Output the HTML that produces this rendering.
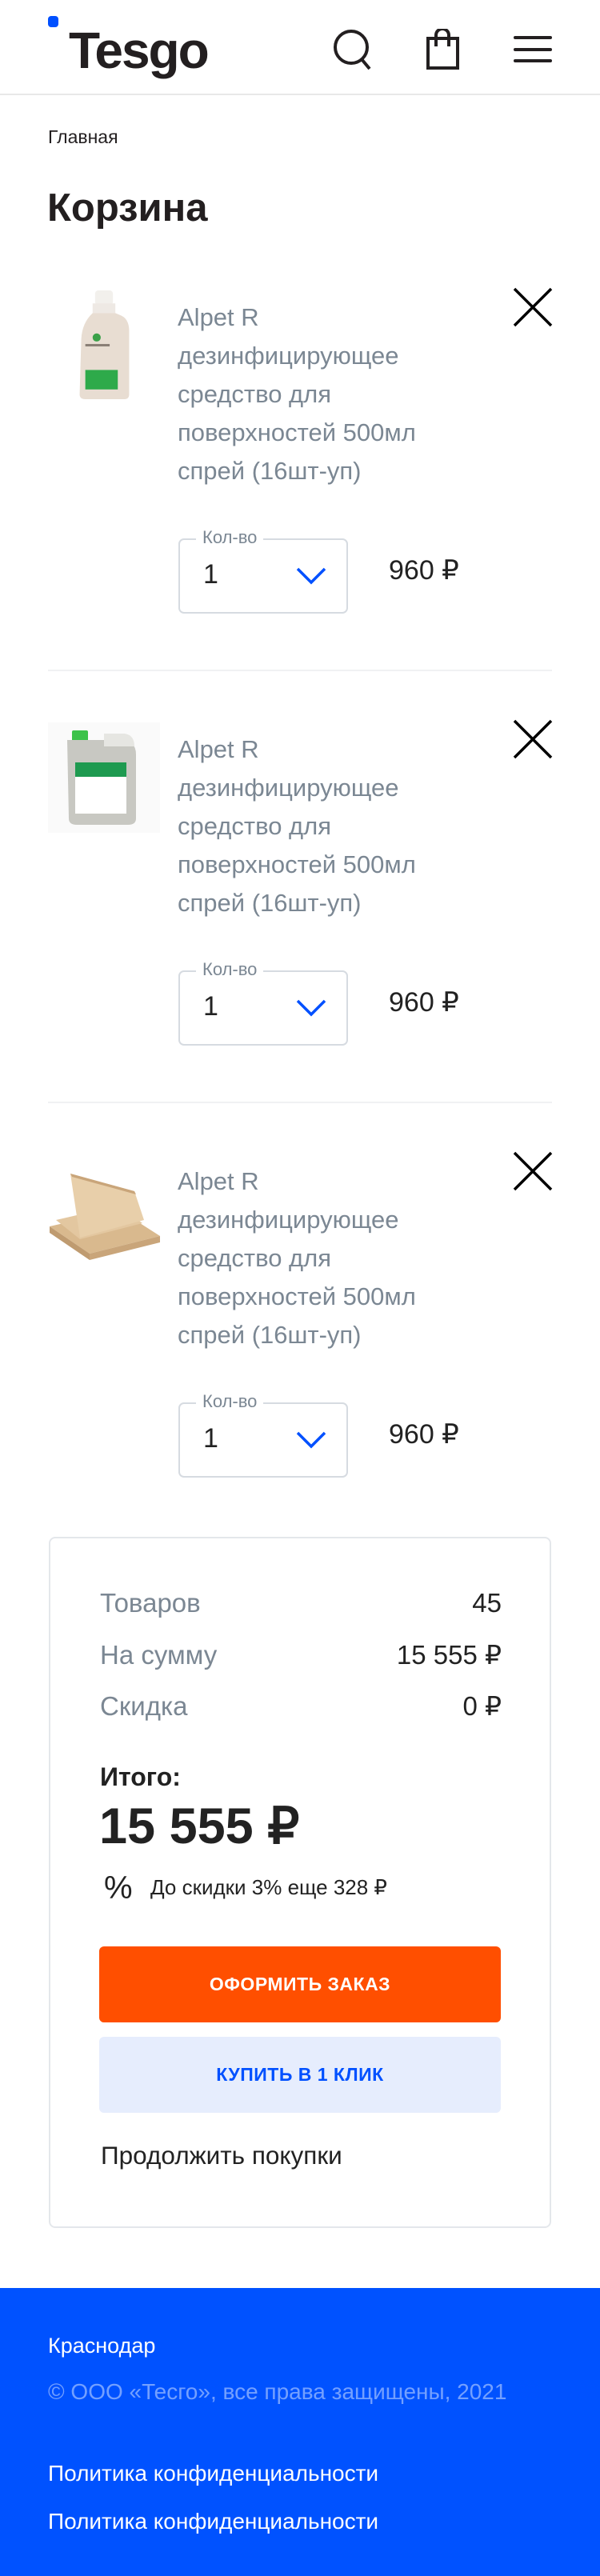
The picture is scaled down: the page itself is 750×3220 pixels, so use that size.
<!DOCTYPE html>
<html><head><meta charset="utf-8">
<style>
*{margin:0;padding:0;box-sizing:border-box}
body{width:750px;height:3220px;position:relative;background:#fff;font-family:"Liberation Sans",Arial,sans-serif;color:#222;overflow:hidden}
.a{position:absolute;white-space:nowrap}
.t{font-size:31px;line-height:48px;color:#7b8793}
.lbl{font-size:22px;color:#7b8793;background:#fff;padding:0 8px;line-height:26px}
.qty{width:212px;height:94px;border:2px solid #d6dbe1;border-radius:7px}
.price{font-size:34px;line-height:40px;color:#222}
.sep{height:2px;background:#f0f1f3;left:60px;width:630px}
.row{font-size:33px;line-height:40px}
.g{color:#7b8793}
</style></head><body>

<!-- header -->
<div class="a" style="left:60px;top:20px;width:13px;height:14px;background:#0050ff;border-radius:4px"></div>
<div class="a" style="left:86px;top:26px;font-size:64px;font-weight:bold;line-height:74px;letter-spacing:-2px;color:#231f20">Tesgo</div>
<svg class="a" style="left:412px;top:34px" width="58" height="56" viewBox="0 0 58 56"><circle cx="27" cy="25" r="20" fill="none" stroke="#231f20" stroke-width="4"/><path d="M40 40 L50 52" stroke="#231f20" stroke-width="4"/></svg>
<svg class="a" style="left:532px;top:36px" width="44" height="52" viewBox="0 0 44 52"><rect x="3" y="12" width="37" height="37" fill="none" stroke="#231f20" stroke-width="4"/><path d="M13 22 V8 A8 8 0 0 1 29 8 V22" fill="none" stroke="#231f20" stroke-width="4"/></svg>
<div class="a" style="left:642px;top:45px;width:48px;height:4px;background:#231f20;border-radius:2px"></div>
<div class="a" style="left:642px;top:60px;width:48px;height:4px;background:#231f20;border-radius:2px"></div>
<div class="a" style="left:642px;top:74px;width:48px;height:4px;background:#231f20;border-radius:2px"></div>
<div class="a" style="left:0;top:117px;width:750px;height:2px;background:#e8e8e8"></div>

<div class="a" style="left:60px;top:157px;font-size:23px;line-height:28px;color:#231f20">Главная</div>
<div class="a" style="left:59px;top:232px;font-size:49px;font-weight:bold;line-height:56px;color:#231f20">Корзина</div>

<!-- item 1 -->
<div class="a" style="left:0;top:0;width:750px;height:900px">
 <svg class="a" style="left:98px;top:363px" width="66" height="138" viewBox="0 0 64 136"><rect x="20" y="0" width="22" height="18" rx="4" fill="#f2f0ec"/><rect x="17" y="16" width="28" height="12" fill="#eee9e4"/><path d="M17 28 Q4 40 3 60 L1 128 Q1 134 8 134 L56 134 Q62 134 62 128 L62 50 Q62 34 50 30 L45 28 Z" fill="#e8ddd2"/><rect x="8" y="98" width="40" height="24" fill="#2eaa4a"/><circle cx="22" cy="58" r="5" fill="#3aa048"/><rect x="8" y="66" width="30" height="3" fill="#8a7f76"/></svg>
 <div class="a t" style="left:222px;top:373px">Alpet R<br>дезинфицирующее<br>средство для<br>поверхностей 500мл<br>спрей (16шт-уп)</div>
 <svg class="a" style="left:640px;top:358px" width="52" height="52" viewBox="0 0 52 52"><path d="M3 3 L49 49 M49 3 L3 49" stroke="#000" stroke-width="3.5"/></svg>
 <div class="a qty" style="left:223px;top:673px"></div>
 <div class="a lbl" style="left:245px;top:659px">Кол-во</div>
 <div class="a" style="left:254px;top:698px;font-size:34px;line-height:40px">1</div>
 <svg class="a" style="left:370px;top:709px" width="38" height="22" viewBox="0 0 38 22"><path d="M2 2 L19 19 L36 2" fill="none" stroke="#0050ff" stroke-width="3.5"/></svg>
 <div class="a price" style="left:486px;top:693px">960 ₽</div>
 <div class="a sep" style="top:837px"></div>
</div>

<!-- item 2 -->
<div class="a" style="left:0;top:540px;width:750px;height:900px">
 <svg class="a" style="left:60px;top:363px" width="140" height="138" viewBox="0 0 140 138"><rect x="0" y="0" width="140" height="138" fill="#fafafa"/><rect x="30" y="10" width="20" height="14" rx="2" fill="#3cc24a"/><path d="M24 22 L90 22 Q110 22 110 40 L110 120 Q110 128 100 128 L36 128 Q26 128 26 120 Z" fill="#c8c8c2"/><path d="M70 14 L96 14 Q108 16 108 30 L70 30 Z" fill="#e6e6e2"/><rect x="34" y="50" width="64" height="64" fill="#fff"/><rect x="34" y="50" width="64" height="18" fill="#1e9a50"/></svg>
 <div class="a t" style="left:222px;top:373px">Alpet R<br>дезинфицирующее<br>средство для<br>поверхностей 500мл<br>спрей (16шт-уп)</div>
 <svg class="a" style="left:640px;top:358px" width="52" height="52" viewBox="0 0 52 52"><path d="M3 3 L49 49 M49 3 L3 49" stroke="#000" stroke-width="3.5"/></svg>
 <div class="a qty" style="left:223px;top:673px"></div>
 <div class="a lbl" style="left:245px;top:659px">Кол-во</div>
 <div class="a" style="left:254px;top:698px;font-size:34px;line-height:40px">1</div>
 <svg class="a" style="left:370px;top:709px" width="38" height="22" viewBox="0 0 38 22"><path d="M2 2 L19 19 L36 2" fill="none" stroke="#0050ff" stroke-width="3.5"/></svg>
 <div class="a price" style="left:486px;top:693px">960 ₽</div>
 <div class="a sep" style="top:837px"></div>
</div>

<!-- item 3 -->
<div class="a" style="left:0;top:1080px;width:750px;height:900px">
 <svg class="a" style="left:60px;top:383px" width="142" height="112" viewBox="0 0 142 112"><path d="M2 70 L90 50 L140 82 L52 104 Z" fill="#d9b98e"/><path d="M52 104 L140 82 L140 90 L52 112 Z" fill="#c9a57a"/><path d="M2 70 L52 104 L52 112 L2 78 Z" fill="#bf9b70"/><path d="M10 62 L88 44 L118 66 L40 86 Z" fill="#e3c7a0"/><path d="M28 4 L108 26 L120 62 L40 84 Z" fill="#e8cfaa"/><path d="M28 4 L108 26 L110 30 L30 8 Z" fill="#c9a57a"/></svg>
 <div class="a t" style="left:222px;top:373px">Alpet R<br>дезинфицирующее<br>средство для<br>поверхностей 500мл<br>спрей (16шт-уп)</div>
 <svg class="a" style="left:640px;top:358px" width="52" height="52" viewBox="0 0 52 52"><path d="M3 3 L49 49 M49 3 L3 49" stroke="#000" stroke-width="3.5"/></svg>
 <div class="a qty" style="left:223px;top:673px"></div>
 <div class="a lbl" style="left:245px;top:659px">Кол-во</div>
 <div class="a" style="left:254px;top:698px;font-size:34px;line-height:40px">1</div>
 <svg class="a" style="left:370px;top:709px" width="38" height="22" viewBox="0 0 38 22"><path d="M2 2 L19 19 L36 2" fill="none" stroke="#0050ff" stroke-width="3.5"/></svg>
 <div class="a price" style="left:486px;top:693px">960 ₽</div>
</div>

<!-- summary -->
<div class="a" style="left:61px;top:1921px;width:628px;height:864px;border:2px solid #e4e7eb;border-radius:8px"></div>
<div class="a row g" style="left:125px;top:1984px">Товаров</div>
<div class="a row" style="right:123px;top:1984px">45</div>
<div class="a row g" style="left:125px;top:2049px">На сумму</div>
<div class="a row" style="right:123px;top:2049px">15 555 ₽</div>
<div class="a row g" style="left:125px;top:2113px">Скидка</div>
<div class="a row" style="right:123px;top:2113px">0 ₽</div>
<div class="a" style="left:125px;top:2201px;font-size:32px;font-weight:bold;line-height:40px">Итого:</div>
<div class="a" style="left:124px;top:2247px;font-size:63px;font-weight:bold;line-height:72px">15 555 ₽</div>
<div class="a" style="left:130px;top:2338px;font-size:40px;line-height:44px">%</div>
<div class="a" style="left:188px;top:2343px;font-size:26px;line-height:32px">До скидки 3% еще 328 ₽</div>
<div class="a" style="left:124px;top:2433px;width:502px;height:95px;background:#ff4f00;border-radius:6px;color:#fff;font-weight:bold;font-size:23px;line-height:95px;text-align:center;letter-spacing:0.5px">ОФОРМИТЬ ЗАКАЗ</div>
<div class="a" style="left:124px;top:2546px;width:502px;height:95px;background:#e6edfd;border-radius:6px;color:#0050ff;font-weight:bold;font-size:23px;line-height:95px;text-align:center;letter-spacing:0.5px">КУПИТЬ В 1 КЛИК</div>
<div class="a" style="left:126px;top:2676px;font-size:31.5px;line-height:36px;color:#222">Продолжить покупки</div>

<!-- footer -->
<div class="a" style="left:0;top:2860px;width:750px;height:360px;background:#0052ff"></div>
<div class="a" style="left:60px;top:2915px;font-size:27px;line-height:34px;color:#fff">Краснодар</div>
<div class="a" style="left:60px;top:2973px;font-size:28px;line-height:34px;color:rgba(255,255,255,0.45)">© ООО «Тесго», все права защищены, 2021</div>
<div class="a" style="left:60px;top:3075px;font-size:28px;line-height:34px;color:#fff">Политика конфиденциальности</div>
<div class="a" style="left:60px;top:3135px;font-size:28px;line-height:34px;color:#fff">Политика конфиденциальности</div>
</body></html>
